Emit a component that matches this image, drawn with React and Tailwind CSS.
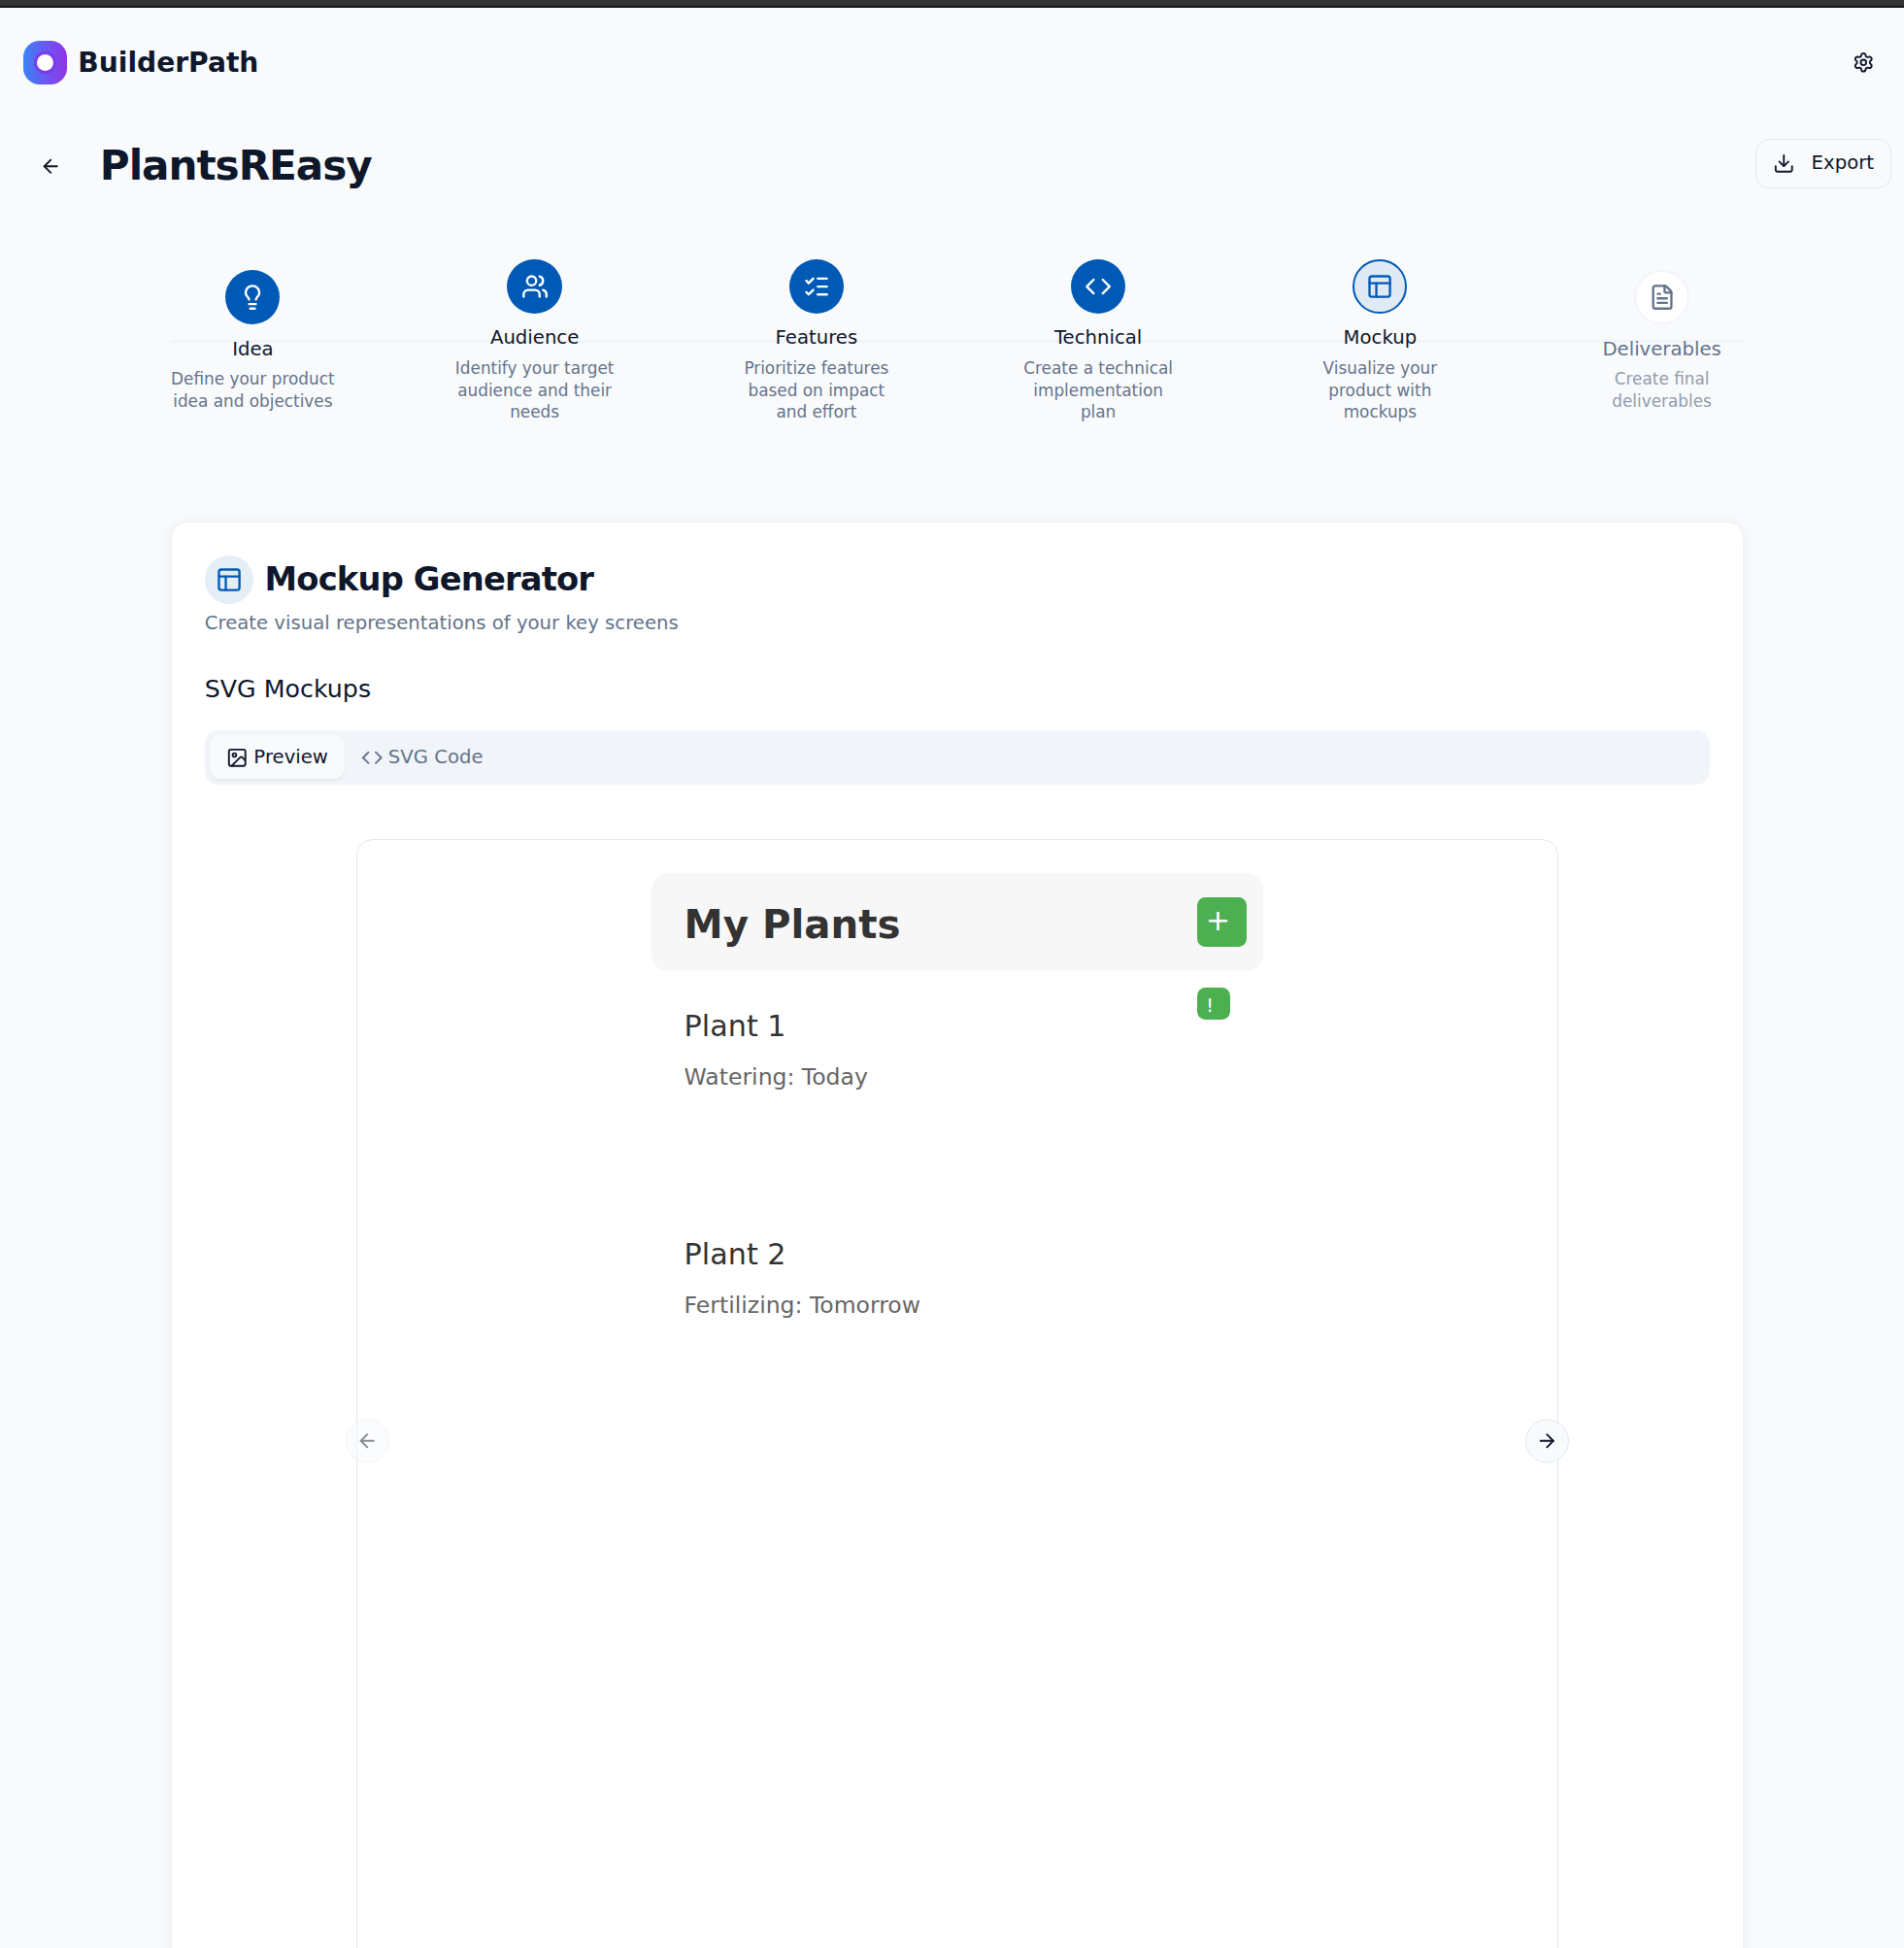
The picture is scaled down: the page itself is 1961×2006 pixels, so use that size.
import React from "react";
import {
  ArrowLeft,
  ArrowRight,
  Code,
  Download,
  FileText,
  Image,
  Lightbulb,
  ListChecks,
  PanelsTopLeft,
  Settings,
  Users,
} from "lucide-react";

const steps = [
  { label: "Idea", text: "Define your product idea and objectives", icon: Lightbulb, state: "done" },
  { label: "Audience", text: "Identify your target audience and their needs", icon: Users, state: "done" },
  { label: "Features", text: "Prioritize features based on impact and effort", icon: ListChecks, state: "done" },
  { label: "Technical", text: "Create a technical implementation plan", icon: Code, state: "done" },
  { label: "Mockup", text: "Visualize your product with mockups", icon: PanelsTopLeft, state: "current" },
  { label: "Deliverables", text: "Create final deliverables", icon: FileText, state: "upcoming" },
];

const circleStyles = {
  done: "bg-[#005ab5] text-white",
  current: "border-2 border-[#005ab5] bg-[#e0eaf4] text-[#005ab5]",
  upcoming: "border-2 border-[#f1f4fa] bg-white text-[#64748b]",
};

function Step({ label, text, icon: Icon, state }) {
  const upcoming = state === "upcoming";
  return (
    <div className="relative flex w-[120px] flex-col items-center">
      <div className={`flex size-10 items-center justify-center rounded-full ${circleStyles[state]}`}>
        <Icon className="size-5" />
      </div>
      <div className={`mt-2 text-sm ${upcoming ? "text-[#64748b]" : "text-[#0f172a]"}`}>{label}</div>
      <div className={`mt-1 text-center text-xs text-[#64748b] ${upcoming ? "opacity-70" : ""}`}>{text}</div>
    </div>
  );
}

function Plant({ name, task, badge }) {
  return (
    <div className="flex h-[167.25px] items-start justify-between pl-[23.9px] pr-[24.1px]">
      <div className="pt-[28.6px]">
        <div className="text-[21.5px] leading-[24px] text-[#333333]">{name}</div>
        <div className="mt-[15px] text-[16.73px] leading-[20px] text-[#666666]">{task}</div>
      </div>
      {badge && (
        <div className="mt-[11.95px] flex size-[23.9px] items-center rounded-[5.97px] bg-[#4caf50] pl-[5.97px] pt-[2px] text-[14.34px] leading-none text-white">
          {badge}
        </div>
      )}
    </div>
  );
}

export default function App() {
  return (
    <div className="h-[2006px] w-[1961px] overflow-hidden bg-[#f9fafc] font-['DejaVu_Sans',sans-serif] text-[#0f172a]">
      <div className="[zoom:1.40625]">
        <div className="h-[5.8px] border-b-2 border-[#161616] bg-[#333333]" />

        <div className="ml-[1.15px] w-[1400px]">
          <header className="flex items-center justify-between px-4 pt-5">
            <div className="flex items-center gap-2">
              <div className="flex size-8 items-center justify-center rounded-xl bg-linear-to-r/srgb from-[#3b82f6] to-[#9333ea]">
                <div className="flex size-4 items-center justify-center rounded-full bg-[#7c3aed]">
                  <div className="size-3 rounded-full bg-white" />
                </div>
              </div>
              <span className="text-xl font-bold">BuilderPath</span>
            </div>
            <button className="flex size-10 items-center justify-center">
              <Settings className="size-4" />
            </button>
          </header>

          <div className="mt-9 flex items-start justify-between px-4">
            <div className="flex items-center gap-4">
              <button className="flex size-10 items-center justify-center">
                <ArrowLeft className="size-4" />
              </button>
              <h1 className="text-3xl font-bold tracking-tight">PlantsREasy</h1>
            </div>
            <button className="flex h-9 items-center gap-[12px] rounded-[10px] border border-[#e2e8f0] px-3 text-sm">
              <Download className="size-4" />
              <span className="-mt-[0.9px]">Export</span>
            </button>
          </div>

          <main className="mx-auto w-[1152px]">
            <div className="relative mt-12 flex items-center justify-between">
              <div className="absolute inset-x-0 top-[59px] h-0.5 bg-[#f1f4f9]" />
              {steps.map((step) => (
                <Step key={step.label} {...step} />
              ))}
            </div>

            <section className="mt-[72px] h-[1300px] rounded-xl border border-[#eef0f5] bg-white p-6 shadow-[0_2px_12px_rgba(0,0,0,0.05)]">
              <div className="flex items-center gap-2">
                <div className="flex size-9 items-center justify-center rounded-full bg-[#e5edf7] text-[#005ab5]">
                  <PanelsTopLeft className="size-5" />
                </div>
                <h2 className="text-2xl font-bold tracking-tight">Mockup Generator</h2>
              </div>
              <p className="mt-1 text-sm text-[#64748b]">Create visual representations of your key screens</p>

              <h3 className="mt-6 text-lg">SVG Mockups</h3>

              <div className="mt-4 flex h-10 rounded-[10px] bg-[#f1f5f9] p-1 text-sm">
                <div className="flex items-center gap-1 rounded-lg bg-[#f9fafc] px-3 shadow-[0_1px_2px_rgba(0,0,0,0.06)]">
                  <Image className="size-4" />
                  Preview
                </div>
                <div className="flex items-center gap-1 px-3 text-[#64748b]">
                  <Code className="size-4" />
                  SVG Code
                </div>
              </div>

              <div className="relative mx-auto mt-10 h-[881.4px] w-[880px] rounded-xl border border-[#e2e8f0] p-6">
                <div className="mx-auto w-[448px]">
                  <div className="flex h-[71.68px] items-center justify-between rounded-[11.95px] bg-[#f7f7f7] pl-[23.9px] pr-[12.3px]">
                    <div className="pt-[5.2px] text-[28.67px] leading-none font-bold text-[#333333]">My Plants</div>
                    <div className="flex size-[35.84px] items-center rounded-[5.97px] bg-[#4caf50] pb-[1.7px] pl-[5.97px] text-[21.5px] leading-none text-white">
                      +
                    </div>
                  </div>
                  <Plant name="Plant 1" task="Watering: Today" badge="!" />
                  <Plant name="Plant 2" task="Fertilizing: Tomorrow" />
                </div>

                <button className="absolute top-1/2 -left-[8.6px] flex size-8 -translate-y-1/2 items-center justify-center rounded-full border border-[#e2e8f0] bg-[#f9fafc] opacity-50">
                  <ArrowLeft className="size-4" />
                </button>
                <button className="absolute top-1/2 -right-[8.7px] flex size-8 -translate-y-1/2 items-center justify-center rounded-full border border-[#e2e8f0] bg-[#f9fafc]">
                  <ArrowRight className="size-4" />
                </button>
              </div>
            </section>
          </main>
        </div>
      </div>
    </div>
  );
}
